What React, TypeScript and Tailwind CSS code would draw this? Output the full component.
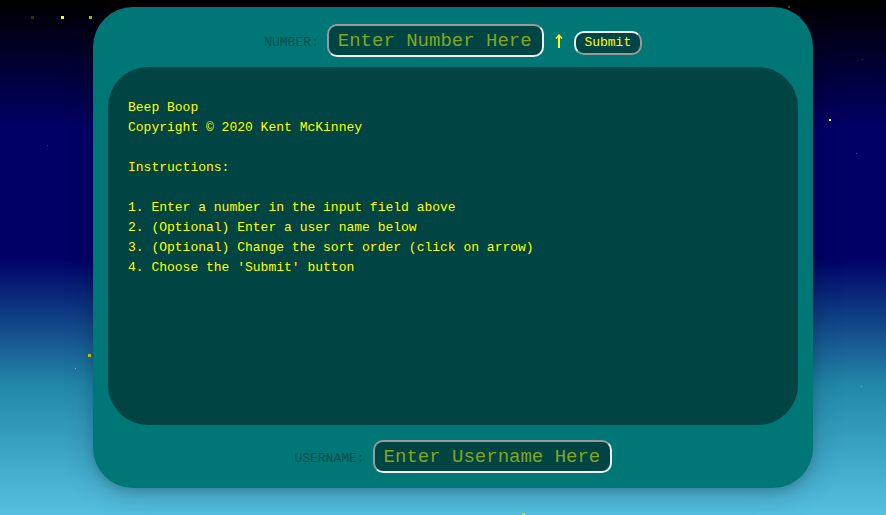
import { useState } from "react";

const stars = [
  "left-[31px] top-[16px] size-[3px] bg-[#33330f]",
  "left-[61px] top-[16px] size-[3px] bg-[#ffff00]",
  "left-[89px] top-[16px] size-[3px] bg-[#b3b300]",
  "left-[88px] top-[354px] size-[3px] bg-[#c8d020]",
  "left-[75px] top-[368px] size-px bg-[#8fc06a]",
  "left-[47px] top-[145px] size-px bg-[#33338a]",
  "left-[788px] top-[6px] size-[2px] bg-[#4d4d10]",
  "left-[829px] top-[119px] size-[2px] bg-[#ffff00]",
  "left-[862px] top-[59px] size-px bg-[#3c3c50]",
  "left-[856px] top-[153px] size-px bg-[#4a4a70]",
  "left-[861px] top-[386px] size-px bg-[#7fb890]",
  "left-[522px] top-[513px] size-[3px] bg-[#c0e040]",
];

const steps = [
  "1. Enter a number in the input field above",
  "2. (Optional) Enter a user name below",
  "3. (Optional) Change the sort order (click on arrow)",
  "4. Choose the 'Submit' button",
];

const field =
  "h-[33px] rounded-[10px] border-2 border-t-[#999999] border-l-[#999999] border-r-[#eeeeee] border-b-[#eeeeee] bg-[#004444] px-[9px] text-[19px] text-[#ffff00] placeholder:text-[#84a61d]";

export default function App() {
  const [ascending, setAscending] = useState(true);

  return (
    <div className="relative min-h-screen overflow-hidden bg-[linear-gradient(to_bottom,#000000_0%,#000066_25%,#000066_50%,#2288aa_75%,#55bfe0_100%)] font-['Liberation_Mono','Courier_New',monospace] text-[13px]">
      {stars.map((star) => (
        <span key={star} aria-hidden="true" className={`absolute ${star}`} />
      ))}

      <main className="pt-[7px] pb-[27px] pl-5">
        <form
          onSubmit={(event) => event.preventDefault()}
          className="relative mx-auto max-w-[720px] rounded-[40px] bg-[#007777] px-[15px] pt-[17px] pb-[15px] shadow-[0_4px_8px_rgba(0,0,0,0.12),0_6px_30px_rgba(0,0,0,0.2)]"
        >
          <div className="flex items-baseline justify-center">
            <label htmlFor="number" className="mr-2 text-[#004f4f]">
              NUMBER:
            </label>
            <input
              id="number"
              type="text"
              inputMode="numeric"
              placeholder="Enter Number Here"
              className={`${field} w-[217px]`}
            />
            <button
              type="button"
              aria-label="Change the sort order"
              onClick={() => setAscending(!ascending)}
              className="flex w-[30px] justify-center self-center"
            >
              <svg
                viewBox="0 0 8 14"
                className={ascending ? "h-[14px] w-2" : "h-[14px] w-2 rotate-180"}
                fill="none"
                stroke="#ffff00"
              >
                <path d="M4 1V14" strokeWidth="2" />
                <path d="M1 4.5L4 1L7 4.5" strokeWidth="1.5" />
              </svg>
            </button>
            <button
              type="submit"
              className="h-6 w-[68px] rounded-[10px] border-2 border-t-[#eeeeee] border-l-[#eeeeee] border-r-[#999999] border-b-[#999999] bg-[#004444] leading-5 text-[#ffff00]"
            >
              Submit
            </button>
          </div>

          <section className="mt-[10px] min-h-[358px] rounded-[40px] bg-[#004444] px-5 py-[31px] leading-5 text-[#ffff00]">
            <p>Beep Boop</p>
            <p>Copyright © 2020 Kent McKinney</p>
            <p className="my-5">Instructions:</p>
            {steps.map((step) => (
              <p key={step}>{step}</p>
            ))}
          </section>

          <div className="mt-[15px] flex items-baseline justify-center">
            <label htmlFor="username" className="mr-2 text-[#004f4f]">
              USERNAME:
            </label>
            <input
              id="username"
              type="text"
              placeholder="Enter Username Here"
              className={`${field} w-[239px]`}
            />
          </div>
        </form>
      </main>
    </div>
  );
}
